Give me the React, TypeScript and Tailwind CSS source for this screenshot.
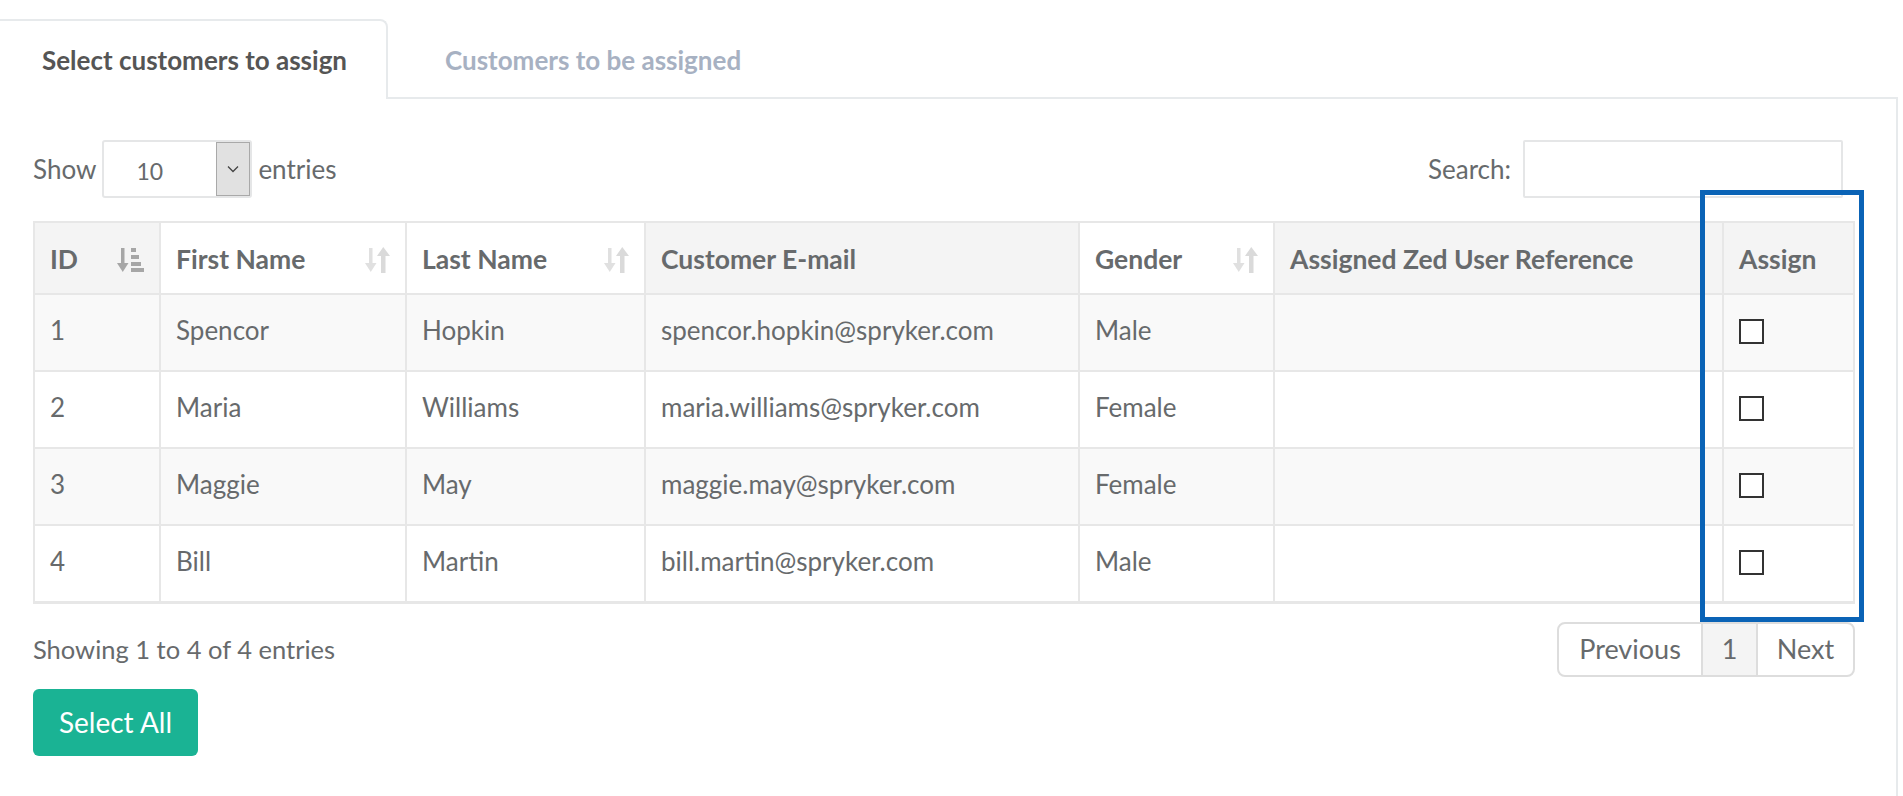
import React from 'react';

type Col = { key: string; label: string; width: string; head: string; sort?: 'asc' | 'both' };

const COLUMNS: Col[] = [
  { key: 'id', label: 'ID', width: 'w-[126px]', head: 'bg-[#f4f4f4]', sort: 'asc' },
  { key: 'first', label: 'First Name', width: 'w-[246px]', head: 'bg-white', sort: 'both' },
  { key: 'last', label: 'Last Name', width: 'w-[239px]', head: 'bg-white', sort: 'both' },
  { key: 'email', label: 'Customer E-mail', width: 'w-[434px]', head: 'bg-[#f4f4f4]' },
  { key: 'gender', label: 'Gender', width: 'w-[195px]', head: 'bg-white', sort: 'both' },
  { key: 'ref', label: 'Assigned Zed User Reference', width: 'w-[449px]', head: 'bg-[#f4f4f4]' },
  { key: 'assign', label: 'Assign', width: 'w-[131px]', head: 'bg-[#f4f4f4]' },
];

const CUSTOMERS = [
  { id: 1, first: 'Spencor', last: 'Hopkin', email: 'spencor.hopkin@spryker.com', gender: 'Male' },
  { id: 2, first: 'Maria', last: 'Williams', email: 'maria.williams@spryker.com', gender: 'Female' },
  { id: 3, first: 'Maggie', last: 'May', email: 'maggie.may@spryker.com', gender: 'Female' },
  { id: 4, first: 'Bill', last: 'Martin', email: 'bill.martin@spryker.com', gender: 'Male' },
];

const SortBoth = () => (
  <svg width="26" height="28" viewBox="0 0 26 28" className="shrink-0">
    <rect x="5" y="2" width="3.5" height="17" fill="#e0e0e0" />
    <polygon points="1,17 12.5,17 6.75,26" fill="#e0e0e0" />
    <rect x="17" y="9" width="4.5" height="18" fill="#dadada" />
    <polygon points="13,10 26,10 19.25,1" fill="#dadada" />
  </svg>
);

const SortAsc = () => (
  <svg width="27" height="26" viewBox="0 0 27 26" className="shrink-0">
    <rect x="4" y="1" width="3.5" height="17" fill="#a6a6a6" />
    <polygon points="0,16 11.5,16 5.75,25" fill="#a6a6a6" />
    <rect x="14" y="1" width="5" height="4" fill="#a6a6a6" />
    <rect x="14" y="8" width="8" height="4" fill="#a6a6a6" />
    <rect x="14" y="15" width="10" height="4" fill="#a6a6a6" />
    <rect x="14" y="21" width="13" height="4" fill="#a6a6a6" />
  </svg>
);

const cell = 'border-2 border-[#e7e7e7] px-[15px] pb-[4px]';

export default function App() {
  return (
    <div className="relative min-h-[796px] w-[1898px] bg-white font-['Lato',sans-serif] text-[#676a6c]">
      {/* Tabs */}
      <div className="flex h-[99px] items-end">
        <div className="flex h-[80px] w-[388px] items-center rounded-tr-[8px] border-t-2 border-r-2 border-[#e7eaec] bg-white pl-[42px] text-[26px] font-bold text-[#555]">
          Select customers to assign
        </div>
        <div className="flex h-[80px] flex-1 items-center border-b-2 border-[#e7eaec] pt-[4px] pl-[57px] text-[26px] font-bold text-[#a7b1c2]">
          Customers to be assigned
        </div>
      </div>

      {/* Tab content */}
      <div className="min-h-[697px] border-r-2 border-[#e7eaec] pl-[33px] pr-[43px]">
        <div className="flex h-[100px] items-start justify-between pt-[41px]">
          <div className="flex items-center gap-[6px] text-[26px]">
            <span>Show</span>
            <div className="flex h-[58px] w-[150px] items-center rounded-[3px] border-2 border-[#e5e6e7] bg-white">
              <span className="flex-1 pt-[5px] pl-[32px] text-[23px]">10</span>
              <span className="flex h-[54px] w-[34px] items-center justify-center border border-[#a9a9a9] bg-[#e1e1e1]">
                <svg width="12" height="8" viewBox="0 0 12 8">
                  <polyline points="1,1.5 6,6.5 11,1.5" fill="none" stroke="#444" strokeWidth="1.3" />
                </svg>
              </span>
            </div>
            <span>entries</span>
          </div>
          <div className="mr-[10px] flex items-center gap-[12px] text-[26px]">
            <span>Search:</span>
            <div className="h-[58px] w-[320px] rounded-[2px] border-2 border-[#e5e6e7] bg-white" />
          </div>
        </div>

        <div className="pt-[22px]">
          <table className="w-[1820px] table-fixed border-collapse border-b-[3px] border-[#e7e7e7] text-[26px]">
            <thead>
              <tr className="h-[72px]">
                {COLUMNS.map((c) => (
                  <th key={c.key} className={`${c.width} ${c.head} border-2 border-[#e7e7e7] px-[15px] pt-[3px] text-left text-[26.5px] font-bold`}>
                    <div className="flex items-center justify-between">
                      <span>{c.label}</span>
                      {c.sort === 'asc' && <SortAsc />}
                      {c.sort === 'both' && <SortBoth />}
                    </div>
                  </th>
                ))}
              </tr>
            </thead>
            <tbody>
              {CUSTOMERS.map((r, i) => (
                <tr key={r.id} className={`h-[77px] ${i % 2 === 0 ? 'bg-[#f9f9f9]' : 'bg-white'}`}>
                  <td className={cell}>{r.id}</td>
                  <td className={cell}>{r.first}</td>
                  <td className={cell}>{r.last}</td>
                  <td className={cell}>{r.email}</td>
                  <td className={cell}>{r.gender}</td>
                  <td className={cell}></td>
                  <td className="border-2 border-[#e7e7e7] px-[15px] pb-[2px]">
                    <span className="block h-[25px] w-[25px] border-2 border-[#333] bg-white" />
                  </td>
                </tr>
              ))}
            </tbody>
          </table>
        </div>

        <div className="flex items-center justify-between pt-[18px]">
          <span className="text-[25.5px]">Showing 1 to 4 of 4 entries</span>
          <div className="mr-[-2px] flex h-[55px] overflow-hidden rounded-[8px] border-2 border-[#dddddd] text-[27px]">
            <span className="flex w-[142px] items-center justify-center">Previous</span>
            <span className="flex w-[57px] items-center justify-center border-x-2 border-[#dddddd] bg-[#f4f4f4]">1</span>
            <span className="flex w-[95px] items-center justify-center">Next</span>
          </div>
        </div>

        <button className="mt-[12px] flex h-[67px] w-[165px] items-center justify-center rounded-[6px] bg-[#1ab394] text-[28px] text-white">
          Select All
        </button>
      </div>

      {/* highlight box */}
      <div className="absolute left-[1700px] top-[190px] h-[432px] w-[164px] border-[5px] border-[#0a63b6]" />
    </div>
  );
}
